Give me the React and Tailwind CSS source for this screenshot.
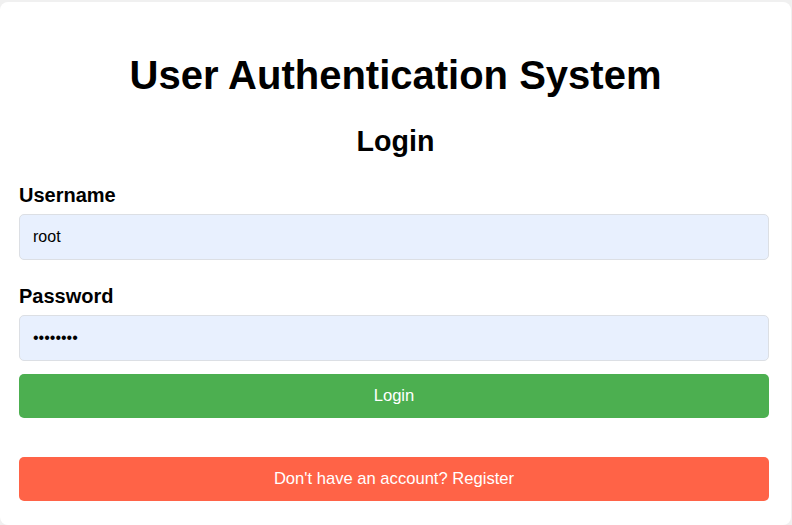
import { useState } from 'react';

export default function App() {
  const [username, setUsername] = useState('root');
  const [password, setPassword] = useState('12345678');

  return (
    <div className="min-h-screen bg-[#f0f0f0] pt-[2px]" style={{ fontFamily: '"Liberation Sans", Arial, sans-serif' }}>
      <div className="w-[791px] bg-white rounded-[8px] px-[19px] pt-[50px] pb-[24px] text-black">
        <h1 className="text-[40px] leading-[46px] font-bold text-center">User Authentication System</h1>
        <h2 className="mt-[27px] text-[28.6px] leading-[33px] font-bold text-center">Login</h2>

        <form className="mt-[25px] w-[750px]" onSubmit={(e) => e.preventDefault()}>
          <label className="block text-[20px] leading-[24px] font-bold">Username</label>
          <input
            type="text"
            value={username}
            onChange={(e) => setUsername(e.target.value)}
            className="mt-[7px] block w-full h-[46px] px-[13px] bg-[#e8f0fe] border border-[#dcdfe4] rounded-[5px] text-[16px] outline-none"
          />

          <label className="mt-[24px] block text-[20px] leading-[24px] font-bold">Password</label>
          <input
            type="password"
            value={password}
            onChange={(e) => setPassword(e.target.value)}
            className="mt-[7px] block w-full h-[46px] px-[13px] bg-[#e8f0fe] border border-[#dcdfe4] rounded-[5px] text-[16px] outline-none"
          />

          <button
            type="submit"
            className="mt-[13px] block w-full h-[44px] pt-[1px] bg-[#4caf50] text-white text-[16.6px] rounded-[5px]"
          >
            Login
          </button>
        </form>

        <button className="mt-[39px] block w-[750px] h-[44px] pt-[1px] bg-[#ff6347] text-white text-[16.6px] rounded-[5px]">
          Don't have an account? Register
        </button>
      </div>
    </div>
  );
}
